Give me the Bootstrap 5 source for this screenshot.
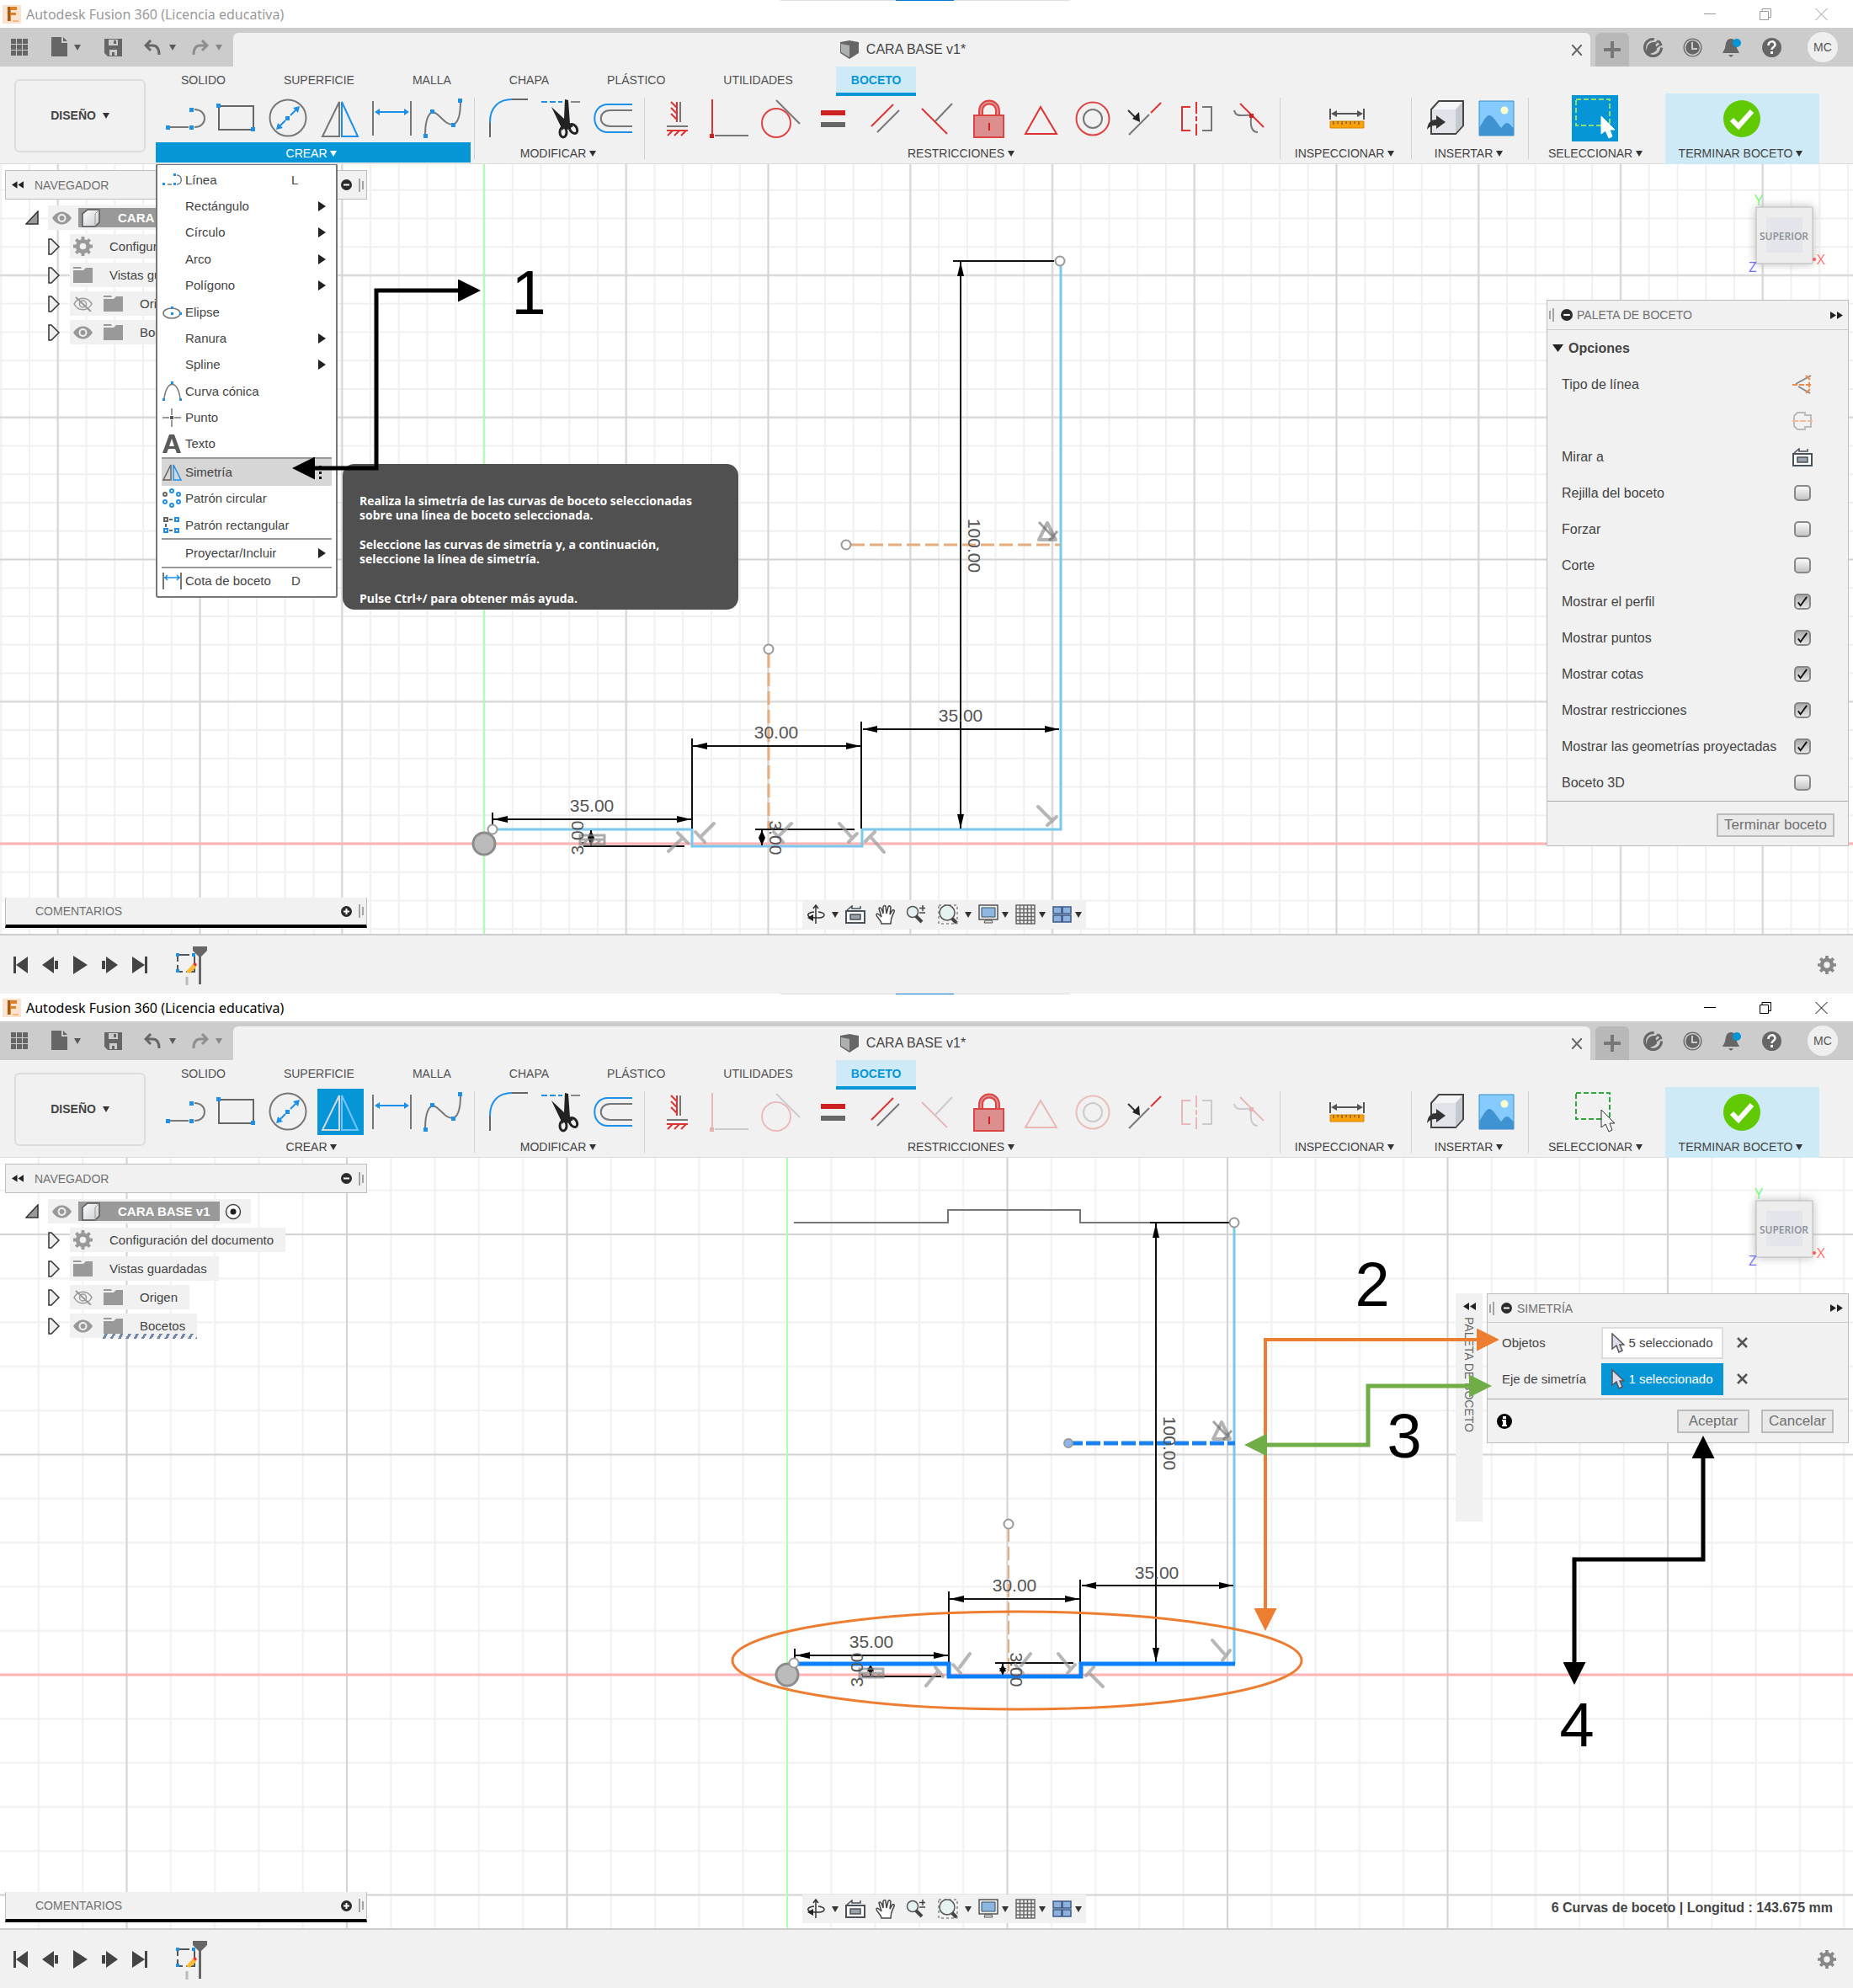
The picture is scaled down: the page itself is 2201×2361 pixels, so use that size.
<!DOCTYPE html>
<html lang="es">
<head>
<meta charset="utf-8">
<meta name="viewport" content="width=device-width, initial-scale=1">
<title>Autodesk Fusion 360 (Licencia educativa)</title>
<link href="https://cdn.jsdelivr.net/npm/bootstrap@5.3.0/dist/css/bootstrap.min.css" rel="stylesheet">
<style>
body{font-family:"Liberation Sans",Arial,sans-serif;font-size:15px;line-height:20px;color:#444;background:#fff}
svg{display:block;flex:none}
button{font-family:inherit}
.plain{border:0;background:none;padding:0;color:inherit;font-size:inherit;line-height:inherit}
.caret{display:inline-block;border:4px solid transparent;border-top:7px solid #333;border-bottom:0;vertical-align:1px}
/* title bar */
.titlebar{height:33px;padding:0 30px 0 3px;font-family:"Noto Sans","Open Sans",sans-serif;font-size:16px;color:#999;background:#fff;position:relative}
.win-b .titlebar{color:#000}
.titlebar .snap{position:absolute;top:0;left:927px;width:344px;height:1px;background:#e0e0e0}
.titlebar .snap i{display:block;margin-left:137px;width:69px;height:1px;background:#0078d7}
.win-ctl{gap:52px}
/* document bar */
.docbar{height:46px;background:#ccc;color:#666;padding-right:18px}
.quick{width:277px;padding-left:13px}
.doctab{margin-top:6px;height:40px;background:#f1f1f1;border-radius:6px 6px 0 0;font-size:16px;color:#444;padding-right:10px}
.newtab{margin:6px 0 0 6px;width:40px;height:40px;background:#b8b8b8;border-radius:6px 6px 0 0}
.avatar{width:36px;height:36px;border-radius:50%;background:#efefef;font-size:14px;color:#555;margin-left:7px}
.redo-c{opacity:.6}
.docicons{gap:24px;padding-left:17px}
/* ribbon */
.ribbon{background:#f1f1f1;border-bottom:1px solid #dcdcdc;height:116px;font-size:14px}
.workspace{width:156px;height:87px;margin:15px 12px 0 17px;border:2px solid #ddd;border-radius:6px;font-weight:700;background:#f1f1f1;color:#444;padding-bottom:2px}
.rtabs{height:32px;padding-left:12px;gap:33px}
.rtabs a{height:35px;padding:6px 18px 0;color:#505050;text-decoration:none}
.rtabs a.on{background:#cdeaf6;border-bottom:4px solid #0696d7;color:#0696d7;font-weight:700}
.rgroup{height:83px;padding-top:2px;position:relative}
.rgroup::after{content:"";position:absolute;right:0;top:5px;bottom:5px;width:1px;background:#d2d2d2}
.rgroup .set{height:55px}
.rgroup .glabel{height:24px;margin-top:1px;padding:2px 4px 0 0;color:#444;width:100%}
.g-crear{width:379px;padding-right:5px}.g-crear .set{padding:0 5px 0 8px}
.g-mod{width:202px}.g-mod .set{padding:0 10px 0 13px}
.g-res{width:755px}.g-res .set{padding:0 10px 0 11px}
.g-ins{width:156px}.g-imp{width:139px}.g-imp .set{padding:0 11px 0 12px}
.g-sel{width:162px}.g-sel .set{padding-right:6px}.g-sel::after,.g-fin::after{display:none}
.g-fin{width:183px;background:#cdeaf6;height:84px}
.tool{width:55px;height:55px}
.win-a .g-crear .glabel{background:#0696d7;color:#fff}
.win-a .g-crear .caret{border-top-color:#fff}
.win-a .g-sel .tool{background:#0696d7;--dash:#8fe06a;--cur:#fff;--curline:#fff}
.win-b .t-mirror{background:#0696d7;--g:#d8d8d8;--b:#6fc3ff}
.win-b .dim{opacity:.3}
/* canvas */
.canvas{position:relative;min-height:914px;background:#fff;overflow:hidden}
.win-b .canvas{min-height:915px}
.layer{position:absolute;left:0;top:0;width:100%;height:100%}
.notes{z-index:6;pointer-events:none}
.panelbar{width:430px;background:#f1f1f1;border:1px solid #bdbdbd;font-size:14px;color:#707070}
.browser{position:absolute;left:6px;top:7px}
.browser .panelbar{height:35px;padding:0 3px 0 7px}
.tree{padding:7px 0 0 0}
.win-a .tree{width:179px;overflow:hidden}
.tree li{height:29px;margin-bottom:5px;list-style:none;white-space:nowrap}
.tree .cell{background:#f1f1f1;height:29px}
.tree .root{margin-left:24px}
.tree .kid{margin-left:51px}
.rootname{height:23px;background:#999;color:#fff;font-weight:700;padding:0 12px 0 3px;gap:20px}
.win-b .hatch{position:relative}
.win-b .hatch::after{content:"";position:absolute;left:36px;right:0;bottom:-1px;height:6px;background:repeating-linear-gradient(120deg,transparent 0 5px,#7488a8 5px 8px)}
.comments{position:absolute;left:6px;bottom:7px;height:36px;border-bottom:4px solid #000;border-top:0;padding:0 3px 0 35px}
.viewbar{position:absolute;left:calc(50% - 148px);bottom:6px;height:34px;background:#f1f1f1;padding:0 5px;gap:8px}
.status{position:absolute;right:24px;bottom:14px;font-size:16px;font-weight:700;color:#444}
/* create menu */
.cmenu{position:absolute;left:185px;top:-1px;z-index:4;width:216px;min-height:516px;background:#fff;border:2px solid #777;border-radius:3px;padding:2px 5px}
.cmenu button{flex:1 1 0;width:100%;padding:0 5px 0 1px}
.cmenu .ic{width:24px;margin-right:3px}
.cmenu .key{width:43px}
.cmenu .sub{border:6px solid transparent;border-left:9px solid #222;border-right:0;margin-right:2px}
.cmenu hr{margin:0;height:2px;border:0;background:#999;opacity:1}
.cmenu .hot{background:#d6d6d6}
.tip{position:absolute;left:407px;top:356px;z-index:3;width:470px;background:#505050;color:#fff;border-radius:14px;padding:35px 20px 5px;font:700 14px/17px "Open Sans","Noto Sans",sans-serif;white-space:nowrap}
.tip p{margin:0 0 18px}
.tip p.more{margin:0;padding-top:12px}
/* floating panels */
.float{position:absolute;right:5px;background:#f1f1f1;border:1px solid #bdbdbd}
.float .head{height:34px;border-bottom:1px solid #ccc;font-size:14px;color:#707070;padding:0 6px 0 2px}
.palette{top:161px;width:359px;font-size:16px}
.palette .head{height:35px}
.palette .prow{height:43px;padding:0 42px 0 17px}
.palette .foot{height:53px;border-top:1px solid #aaa;padding:3px 16px 0 0}
.dbtn{height:28px;border:2px solid #bbb;background:#e9e9e9;color:#707070;font-size:17px;line-height:22px;padding:0 7px}
.chk{appearance:none;margin:0 2px 0 0;width:20px;height:19px;border:2px solid #888;border-radius:5px;background:linear-gradient(#fafafa,#c4c4c4)}
.chk:checked{background:url("data:image/svg+xml,%3Csvg xmlns='http://www.w3.org/2000/svg' viewBox='0 0 16 16'%3E%3Cpath d='M3 9l3 4 8-11' fill='none' stroke='%23111' stroke-width='2'/%3E%3C/svg%3E"),linear-gradient(#aaa,#e6e6e6)}
.mirror{top:161px;width:430px}
.mirror .mrow{height:43px;padding-left:17px}
.mirror .mlabel{width:118px}
.mirror .foot{height:52px;border-top:1px solid #aaa;padding:0 17px 0 11px}
.pick{width:145px;height:38px;border:2px solid #ddd;background:#fff;color:#444}
.pick.on{background:#0696d7;border-color:#0696d7;color:#fff}
.clearx{width:44px}
.side{position:absolute;right:440px;top:161px;width:32px;height:271px;background:#f1f1f1;font-size:14px;color:#666;padding-top:11px}
.side span{writing-mode:vertical-rl;margin-top:8px}
.cubeview{position:absolute;right:29px;top:31px}
/* timeline */
.timeline{height:71px;background:#f1f1f1;border-top:2px solid #ccc;padding:0 20px 0 14px}
.play{gap:14px}
.dimtxt{font-size:21px;fill:#555;text-anchor:middle}
.num{font-size:74px;fill:#000;text-anchor:middle}
</style>
<script src="https://cdn.jsdelivr.net/npm/bootstrap@5.3.0/dist/js/bootstrap.bundle.min.js"></script>
</head>
<body>

<svg width="0" height="0" class="position-absolute" aria-hidden="true">
<defs>
<marker id="ar" viewBox="0 0 17 8" refX="17" refY="4" markerWidth="17" markerHeight="8" markerUnits="userSpaceOnUse" orient="auto-start-reverse"><path d="M0 0L17 4L0 8z" fill="#000"/></marker>
<marker id="as" viewBox="0 0 9 8" refX="9" refY="4" markerWidth="9" markerHeight="8" markerUnits="userSpaceOnUse" orient="auto-start-reverse"><path d="M0 0L9 4L0 8z" fill="#000"/></marker>
<marker id="bk" viewBox="0 0 27 27" refX="20" refY="13.5" markerWidth="27" markerHeight="27" markerUnits="userSpaceOnUse" orient="auto-start-reverse"><path d="M0 0L27 13.5L0 27z" fill="#000"/></marker>
<marker id="og" viewBox="0 0 27 27" refX="20" refY="13.5" markerWidth="27" markerHeight="27" markerUnits="userSpaceOnUse" orient="auto-start-reverse"><path d="M0 0L27 13.5L0 27z" fill="#ed7d31"/></marker>
<marker id="gn" viewBox="0 0 27 27" refX="20" refY="13.5" markerWidth="27" markerHeight="27" markerUnits="userSpaceOnUse" orient="auto-start-reverse"><path d="M0 0L27 13.5L0 27z" fill="#70ad47"/></marker>
<linearGradient id="box" x1="0" y1="0" x2="1" y2="1"><stop offset="0" stop-color="#fff"/><stop offset="1" stop-color="#c9ccd2"/></linearGradient>

<symbol id="logo" viewBox="0 0 22 22"><path fill="#fbe3cf" d="M0 0h22v22H0z"/><path fill="#d9822b" d="M6 2h11v4h-7v3h6v3h-6v7H6z"/><path fill="#a85a12" d="M6 2h3v17H6z"/><path fill="#f3b988" d="M12 18h7v2h-7z"/></symbol>
<symbol id="cube" viewBox="0 0 24 22"><path fill="#666" d="M1 2L12 0l11 2v13L12 22 1 15z"/><path fill="#adb0b0" d="M2 4l10 2v14L2 14z"/></symbol>
<symbol id="i-line" viewBox="0 0 55 55"><path d="M9 38h22M38 17c16 0 16 21 0 21" fill="none" stroke="#777" stroke-width="2"/><path fill="#1e90e8" d="M4 36h5v5H4zM32 36h5v5h-5zM32 15h5v5h-5z"/></symbol>
<symbol id="i-rect" viewBox="0 0 55 55"><path d="M6 13h41v28H6z" fill="none" stroke="#666" stroke-width="2"/><path fill="#1e90e8" d="M3 10h5v5H3zM44 38h5v5h-5z"/></symbol>
<symbol id="i-circle" viewBox="0 0 55 55"><circle cx="27" cy="27" r="21.500" fill="none" stroke="#777" stroke-width="2"/><path d="M30 24l8-8M24 30l-8 8" stroke="#1e90e8" stroke-width="2"/><path fill="#1e90e8" d="M24 25h5v5h-5zM41 13l-2 8-6-6zM13 41l2-8 6 6z"/></symbol>
<symbol id="i-mirror" viewBox="0 0 55 55"><path d="M26 8v41H6z" fill="none" style="stroke:var(--g,#777)" stroke-width="2"/><path d="M29 8v41h19z" fill="none" style="stroke:var(--b,#1e90e8)" stroke-width="2"/></symbol>
<symbol id="i-dim" viewBox="0 0 55 55"><path d="M5 7v41M50 7v41" stroke="#777" stroke-width="2"/><path d="M10 20h35" stroke="#1e90e8" stroke-width="2"/><path fill="#1e90e8" d="M7 20l6-4v8zM48 20l-6-4v8z"/></symbol>
<symbol id="i-spline" viewBox="0 0 55 55"><path d="M6 48C6 30 9 22 15 20C24 22 28 35 39 35C46 33 48 20 48 7" fill="none" stroke="#777" stroke-width="2"/><path fill="#1e90e8" d="M4 46h5v5H4zM12 17h5v5h-5zM37 33h5v5h-5zM45 4h5v5h-5z"/></symbol>
<symbol id="i-fillet" viewBox="0 0 55 55"><path d="M5 32C5 14 16 5 31 5" fill="none" stroke="#1e90e8" stroke-width="2"/><path d="M5 32v18M31 5h19" stroke="#666" stroke-width="2"/></symbol>
<symbol id="i-trim" viewBox="0 0 55 55"><path d="M4 8h25" stroke="#1e90e8" stroke-width="2" stroke-dasharray="7 3"/><path d="M39 8h11" stroke="#888" stroke-width="2"/><path d="M16 14l15 14 1-23 4 1 2 28 4 3-7 4-3-3-3 4-2-5z" fill="#222"/><ellipse cx="30" cy="44" rx="4" ry="6" fill="none" stroke="#222" stroke-width="3"/><ellipse cx="42" cy="40" rx="4" ry="6" transform="rotate(-35 42 40)" fill="none" stroke="#222" stroke-width="3"/></symbol>
<symbol id="i-offset" viewBox="0 0 55 55"><path d="M50 11H21C0 11 0 44 21 44H50" fill="none" stroke="#1e90e8" stroke-width="2"/><path d="M50 18H24C9 18 9 37 24 37H50" fill="none" stroke="#777" stroke-width="2"/></symbol>
<symbol id="c1" viewBox="0 0 55 55"><path d="M31 8v24M15 37h25" stroke="#777" stroke-width="2"/><path d="M27 8v24M27 15l-7-7M27 22l-7-7M27 29l-7-7M15 42h25M22 42l-6 6M30 42l-6 6M38 42l-6 6" stroke="#d33" stroke-width="2"/></symbol>
<symbol id="c2" viewBox="0 0 55 55"><path d="M7 5v42" stroke="#d33" stroke-width="2"/><path d="M10 48h40" stroke="#777" stroke-width="2"/><path fill="#c22" d="M4 46h5v5H4z"/></symbol>
<symbol id="c3" viewBox="0 0 55 55"><circle cx="22" cy="33" r="17" fill="none" stroke="#d44" stroke-width="2"/><path d="M22 6l28 28" stroke="#777" stroke-width="2"/></symbol>
<symbol id="c4" viewBox="0 0 55 55"><path fill="#c22" d="M13 18h29v6H13z"/><path fill="#666" d="M13 32h29v6H13z"/></symbol>
<symbol id="c5" viewBox="0 0 55 55"><path d="M11 37l26-26" stroke="#d33" stroke-width="2"/><path d="M18 44l26-26" stroke="#777" stroke-width="2"/></symbol>
<symbol id="c6" viewBox="0 0 55 55"><path d="M9 16l30 30" stroke="#d33" stroke-width="2"/><path d="M25 31l20-21" stroke="#777" stroke-width="2"/></symbol>
<symbol id="c7" viewBox="0 0 55 55"><path d="M18 24v-5c0-14 20-14 20 0v5" fill="none" stroke="#d44" stroke-width="6"/><path d="M18 24v-5c0-14 20-14 20 0v5" fill="none" stroke="#dd8e8e" stroke-width="2"/><path d="M10 24h35v26H10z" fill="#dd8e8e" stroke="#d44" stroke-width="2"/><path d="M28 33v9" stroke="#c22" stroke-width="2"/></symbol>
<symbol id="c8" viewBox="0 0 55 55"><path d="M27 14l19 32H9z" fill="none" stroke="#d33" stroke-width="2"/></symbol>
<symbol id="c9" viewBox="0 0 55 55"><circle cx="27" cy="28" r="19.500" fill="none" stroke="#d44" stroke-width="2"/><circle cx="27" cy="28" r="11" fill="none" stroke="#777" stroke-width="2"/></symbol>
<symbol id="c10" viewBox="0 0 55 55"><path d="M9 47l24-24" stroke="#777" stroke-width="2"/><path d="M35 21l12-12" stroke="#d33" stroke-width="2"/><path d="M8 18l9 9" stroke="#333" stroke-width="2"/><path d="M22 32l-9-4 8-8z" fill="#222"/></symbol>
<symbol id="c11" viewBox="0 0 55 55"><path d="M20 14H10v28h10" fill="none" stroke="#d33" stroke-width="2"/><path d="M34 14h11v28H34" fill="none" stroke="#777" stroke-width="2"/><path d="M27 8v14M27 25v6M27 34v14" stroke="#d33" stroke-width="2"/></symbol>
<symbol id="c12" viewBox="0 0 55 55"><path d="M10 18c2 9 9 5 19 6M30 27c-1 10 1 17 8 17" fill="none" stroke="#777" stroke-width="2"/><path d="M17 10l28 28" stroke="#d33" stroke-width="2"/><path fill="#c22" d="M28 22h5v5h-5z"/></symbol>
<symbol id="i-inspect" viewBox="0 0 55 55"><path d="M8 16v13M48 16v13M12 22h32" stroke="#555" stroke-width="2"/><path d="M9 22l7-4v8zM47 22l-7-4v8z" fill="#555"/><path d="M8 31h40v8H8z" fill="#f9a10a" stroke="#d98500"/><path d="M12 31v4M17 31v3M22 31v4M27 31v3M32 31v4M37 31v3M42 31v4" stroke="#543"/></symbol>
<symbol id="i-import" viewBox="0 0 55 55"><path d="M11 17L20 7h29v29l-9 10H11z" fill="#f4f5f7" stroke="#444" stroke-width="2"/><path d="M12 17h28v28H12z" fill="#e2e4ea"/><path d="M40 17l8-9v28l-8 9z" fill="#c6c9d0"/><path d="M6 41c1-9 5-12 11-12v-5l11 8-11 8v-4c-5 0-8 1-11 5z" fill="#333"/></symbol>
<symbol id="i-image" viewBox="0 0 55 55"><path d="M7 7h41v41H7z" fill="#85cbff" stroke="#3b8ccc"/><path d="M7 39c5-8 8-15 12-15s7 6 14 15c3-3 4-6 7-6s4 3 8 6v9H7z" fill="#3f93d0"/><circle cx="37" cy="18" r="4.500" fill="#ffc"/></symbol>
<symbol id="i-select" viewBox="0 0 55 55"><path d="M5 5h40v31H5z" fill="none" style="stroke:var(--dash,#2faa3a)" stroke-width="2" stroke-dasharray="6 3"/><path d="M35 25v21l5-4 4 9 4-2-3-8h6z" style="fill:var(--cur,#f4f4f4);stroke:var(--curline,#333)" stroke-width="1"/></symbol>
<symbol id="i-ok" viewBox="0 0 55 55"><circle cx="27" cy="28" r="22" fill="#61c900"/><path d="M15 29l8 8 16-18" fill="none" stroke="#fff" stroke-width="6"/></symbol>

<symbol id="eye" viewBox="0 0 23 16"><path d="M0 8C6-2 17-2 23 8C17 18 6 18 0 8z" fill="#999"/><circle cx="11.500" cy="8" r="5" fill="#f1f1f1"/><circle cx="11.500" cy="8" r="3" fill="#999"/></symbol>
<symbol id="eyeoff" viewBox="0 0 23 18"><path d="M1 9C6 0 17 0 22 9C17 18 6 18 1 9z" fill="none" stroke="#999" stroke-width="1.500"/><circle cx="11.500" cy="9" r="4" fill="none" stroke="#999" stroke-width="1.500"/><path d="M3 1l18 17" stroke="#999" stroke-width="2"/></symbol>
<symbol id="gear" viewBox="0 0 24 24"><circle cx="12" cy="12" r="6.500" fill="none" stroke="currentColor" stroke-width="5"/><path d="M12 0v5M12 19v5M0 12h5M19 12h5M3.500 3.500l4 4M16.500 16.500l4 4M3.500 20.500l4-4M16.500 7.500l4-4" stroke="currentColor" stroke-width="4"/></symbol>
<symbol id="folder" viewBox="0 0 23 19"><path d="M0 4h12l3-3h8v18H0z" fill="#999"/><path d="M0 0h9l1 2H0z" fill="#999"/></symbol>
<symbol id="box3" viewBox="0 0 24 24"><path d="M2 7l6-5h14v15l-5 5H2z" fill="url(#box)" stroke="#555" stroke-width="1.500"/><path d="M17 22V7l5-5" fill="none" stroke="#999"/></symbol>
<symbol id="tw" viewBox="0 0 14 20"><path d="M1 1h3l9 9-9 9H1z" fill="#eee" stroke="#333" stroke-width="1.500"/></symbol>
<symbol id="twopen" viewBox="0 0 16 17"><path d="M15 1v15H1z" fill="#999" stroke="#333" stroke-width="1.500"/></symbol>
<symbol id="minus" viewBox="0 0 13 13"><circle cx="6.500" cy="6.500" r="6.500" fill="#2b2b2b"/><path d="M3 6.500h7" stroke="#fff" stroke-width="2"/></symbol>
<symbol id="plus" viewBox="0 0 13 13"><circle cx="6.500" cy="6.500" r="6.500" fill="#2b2b2b"/><path d="M3 6.500h7M6.500 3v7" stroke="#fff" stroke-width="2"/></symbol>
<symbol id="rew" viewBox="0 0 15 9"><path d="M7 0v9L0 4.500zM15 0v9L8 4.500z" fill="#222"/></symbol>
<symbol id="fwd" viewBox="0 0 15 9"><path d="M0 0v9l7-4.500zM8 0v9l7-4.500z" fill="#222"/></symbol>
<symbol id="grip" viewBox="0 0 6 16"><path d="M1 0v16" stroke="#888" stroke-width="1.500"/><path d="M5 3v10" stroke="#888" stroke-width="1.500"/></symbol>
<symbol id="gripr" viewBox="0 0 6 16"><path d="M5 0v16" stroke="#888" stroke-width="1.500"/><path d="M1 3v10" stroke="#888" stroke-width="1.500"/></symbol>
<symbol id="arrow" viewBox="0 0 16 24"><path d="M1 1v18l5-4 3 8 4-2-3-7h5z" fill="#dde" stroke="#555" stroke-width="1.500"/></symbol>
<symbol id="look" viewBox="0 0 24 22"><path d="M1 7h22v14H1z" fill="#fff" stroke="#4a5058" stroke-width="2"/><path d="M6 11h12v6H6z" fill="#9aa3ab" stroke="#4a5058" stroke-width="1.500"/><path d="M2 6l6-5v3h10V1" fill="none" stroke="#4a5058" stroke-width="1.500"/></symbol>
<symbol id="mx" viewBox="0 0 13 13"><path d="M1 1l11 11M12 1L1 12" stroke="#555" stroke-width="2.500"/></symbol>
<symbol id="geo" viewBox="0 0 28 26"><path d="M14 3l10 20H4z" fill="none" stroke="#666" stroke-opacity=".5" stroke-width="4" stroke-linejoin="round"/><path d="M4 2l18 19M26 13L16 24" fill="none" stroke="#666" stroke-opacity=".6" stroke-width="3"/></symbol>
</defs>
</svg>

<template id="frame">
  <header class="titlebar d-flex align-items-center">
    <div class="snap"><i></i></div>
    <svg width="22" height="22"><use href="#logo"/></svg>
    <span class="flex-grow-1" style="margin-left:6px">Autodesk Fusion 360 (Licencia educativa)</span>
    <div class="win-ctl d-flex">
      <button class="plain" aria-label="Minimizar"><svg width="14" height="14"><path d="M0 6.500h14" stroke="currentColor"/></svg></button>
      <button class="plain" aria-label="Restaurar"><svg width="14" height="14"><path d="M.5 3.500h10v10H.5zM3 3.500v-3h10.500v10H11" fill="none" stroke="currentColor"/></svg></button>
      <button class="plain" aria-label="Cerrar"><svg width="15" height="14"><path d="M.5 0l14 14M14.500 0l-14 14" stroke="currentColor"/></svg></button>
    </div>
  </header>
  <div class="docbar d-flex align-items-start">
    <div class="quick d-flex align-items-center h-100">
      <button class="plain" aria-label="Datos"><svg width="21" height="21" fill="#666"><path d="M0 0h6v6H0zM7 0h6v6H7zM14 0h6v6h-6zM0 7h6v6H0zM7 7h6v6H7zM14 7h6v6h-6zM0 14h6v6H0zM7 14h6v6H7zM14 14h6v6h-6z"/></svg></button>
      <button class="plain d-flex align-items-center" style="margin-left:27px" aria-label="Archivo"><svg width="19" height="24"><path d="M0 0h12v7h7v16H0zM14 0l5 5h-5z" fill="#666"/></svg><i class="caret ms-2 opacity-75"></i></button>
      <button class="plain" style="margin-left:28px" aria-label="Guardar"><svg width="21" height="21"><path d="M0 0h21v21H4l-4-4zM5 1v7h11V1zM6 13v7h3v-4h3v4h3v-7z" fill="#666" fill-rule="evenodd"/><path d="M11 2h3v4h-3z" fill="#666"/></svg></button>
      <button class="plain d-flex align-items-center" style="margin-left:26px" aria-label="Deshacer"><svg width="20" height="18"><path d="M8 1L2 7l6 6M2 7h8c6 0 8 4 8 11" fill="none" stroke="#666" stroke-width="3"/></svg><i class="caret opacity-75" style="margin-left:10px"></i></button>
      <button class="plain d-flex align-items-center redo-c" style="margin-left:19px" aria-label="Rehacer"><svg width="20" height="18"><path d="M12 1l6 6-6 6M18 7h-8c-6 0-8 4-8 11" fill="none" stroke="#666" stroke-width="3"/></svg><i class="caret opacity-75" style="margin-left:8px"></i></button>
    </div>
    <div class="doctab flex-grow-1 d-flex align-items-center">
      <div class="flex-grow-1 d-flex justify-content-center align-items-center gap-2"><svg width="24" height="22"><use href="#cube"/></svg>CARA BASE v1*</div>
      <button class="plain" aria-label="Cerrar documento"><svg width="12" height="13"><path d="M0 0l12 13M12 0L0 13" stroke="#666" stroke-width="2"/></svg></button>
    </div>
    <button class="plain newtab d-flex align-items-center justify-content-center" aria-label="Nuevo"><svg width="20" height="20"><path d="M10 0v20M0 10h20" stroke="#777" stroke-width="4"/></svg></button>
    <div class="docicons d-flex align-items-center h-100">
      <button class="plain" aria-label="Extensiones"><svg width="23" height="23"><circle cx="11.500" cy="11.500" r="10" fill="none" stroke="#666" stroke-width="3" stroke-dasharray="48 6 6 3"/><path d="M5 19c-1-9 2-13 8-13l2 8c-3 4-6 3-10 5zM13 8l5-5M15 12l5-4" fill="#666" stroke="#666" stroke-width="2"/></svg></button>
      <button class="plain" aria-label="Trabajos"><svg width="23" height="23"><circle cx="11.500" cy="11.500" r="11" fill="#666"/><circle cx="11.500" cy="11.500" r="9" fill="none" stroke="#ccc" stroke-width="1.500"/><path d="M11 5v8h6" fill="none" stroke="#ccc" stroke-width="2"/></svg></button>
      <button class="plain" aria-label="Notificaciones"><svg width="23" height="23"><path d="M10 1c6 0 6 6 7 11l3 6H0l3-6c1-5 1-11 7-11zM7 20h6l-3 3z" fill="#666"/><circle cx="17" cy="6" r="5" fill="#0696d7"/></svg></button>
      <button class="plain" aria-label="Ayuda"><svg width="23" height="23"><circle cx="11.500" cy="11.500" r="11.500" fill="#666"/><path d="M7.500 9c0-6 8-6 8-1 0 3-4 3-4 6" fill="none" stroke="#fff" stroke-width="2.500"/><path d="M10 16h3v3h-3z" fill="#fff"/></svg></button>
      <button class="plain avatar">MC</button>
    </div>
  </div>
  <div class="ribbon d-flex align-items-start">
    <button class="plain workspace">DISEÑO <i class="caret ms-1"></i></button>
    <div class="flex-grow-1">
      <nav class="rtabs d-flex">
        <a href="#">SOLIDO</a><a href="#">SUPERFICIE</a><a href="#">MALLA</a><a href="#">CHAPA</a><a href="#">PLÁSTICO</a><a href="#">UTILIDADES</a><a href="#" class="on">BOCETO</a>
      </nav>
      <div class="d-flex">
        <div class="rgroup g-crear"><div class="set d-flex justify-content-between">
          <button class="plain tool" aria-label="Línea"><svg width="55" height="55"><use href="#i-line"/></svg></button><button class="plain tool" aria-label="Rectángulo"><svg width="55" height="55"><use href="#i-rect"/></svg></button><button class="plain tool" aria-label="Círculo"><svg width="55" height="55"><use href="#i-circle"/></svg></button><button class="plain tool t-mirror" aria-label="Simetría"><svg width="55" height="55"><use href="#i-mirror"/></svg></button><button class="plain tool" aria-label="Cota"><svg width="55" height="55"><use href="#i-dim"/></svg></button><button class="plain tool" aria-label="Spline"><svg width="55" height="55"><use href="#i-spline"/></svg></button>
        </div><button class="plain glabel">CREAR <i class="caret"></i></button></div>
        <div class="rgroup g-mod"><div class="set d-flex justify-content-between">
          <button class="plain tool" aria-label="Empalme"><svg width="55" height="55"><use href="#i-fillet"/></svg></button><button class="plain tool" aria-label="Recortar"><svg width="55" height="55"><use href="#i-trim"/></svg></button><button class="plain tool" aria-label="Desfase"><svg width="55" height="55"><use href="#i-offset"/></svg></button>
        </div><button class="plain glabel">MODIFICAR <i class="caret"></i></button></div>
        <div class="rgroup g-res"><div class="set d-flex justify-content-between">
          <button class="plain tool" aria-label="Horizontal/Vertical"><svg width="55" height="55"><use href="#c1"/></svg></button><button class="plain tool dim" aria-label="Coincidente"><svg width="55" height="55"><use href="#c2"/></svg></button><button class="plain tool dim" aria-label="Tangente"><svg width="55" height="55"><use href="#c3"/></svg></button><button class="plain tool" aria-label="Igual"><svg width="55" height="55"><use href="#c4"/></svg></button><button class="plain tool" aria-label="Paralelo"><svg width="55" height="55"><use href="#c5"/></svg></button><button class="plain tool dim" aria-label="Perpendicular"><svg width="55" height="55"><use href="#c6"/></svg></button><button class="plain tool" aria-label="Bloquear"><svg width="55" height="55"><use href="#c7"/></svg></button><button class="plain tool dim" aria-label="Punto medio"><svg width="55" height="55"><use href="#c8"/></svg></button><button class="plain tool dim" aria-label="Concéntrico"><svg width="55" height="55"><use href="#c9"/></svg></button><button class="plain tool" aria-label="Colineal"><svg width="55" height="55"><use href="#c10"/></svg></button><button class="plain tool dim" aria-label="Simétrico"><svg width="55" height="55"><use href="#c11"/></svg></button><button class="plain tool dim" aria-label="Curvatura"><svg width="55" height="55"><use href="#c12"/></svg></button>
        </div><button class="plain glabel">RESTRICCIONES <i class="caret"></i></button></div>
        <div class="rgroup g-ins"><div class="set d-flex justify-content-center"><button class="plain tool" aria-label="Medir"><svg width="55" height="55"><use href="#i-inspect"/></svg></button></div><button class="plain glabel">INSPECCIONAR <i class="caret"></i></button></div>
        <div class="rgroup g-imp"><div class="set d-flex justify-content-between"><button class="plain tool" aria-label="Derivar"><svg width="55" height="55"><use href="#i-import"/></svg></button><button class="plain tool" aria-label="Lienzo"><svg width="55" height="55"><use href="#i-image"/></svg></button></div><button class="plain glabel">INSERTAR <i class="caret"></i></button></div>
        <div class="rgroup g-sel"><div class="set d-flex justify-content-center"><button class="plain tool" aria-label="Seleccionar"><svg width="55" height="55"><use href="#i-select"/></svg></button></div><button class="plain glabel">SELECCIONAR <i class="caret"></i></button></div>
        <div class="rgroup g-fin"><div class="set d-flex justify-content-center"><button class="plain tool" aria-label="Terminar"><svg width="55" height="55"><use href="#i-ok"/></svg></button></div><button class="plain glabel">TERMINAR BOCETO <i class="caret"></i></button></div>
      </div>
    </div>
  </div>
</template>

<template id="overlays">
  <div class="browser">
    <div class="panelbar d-flex align-items-center">
      <svg width="14" height="9"><use href="#rew"/></svg><span class="flex-grow-1" style="margin-left:13px">NAVEGADOR</span>
      <svg width="13" height="13"><use href="#minus"/></svg><svg class="ms-2" width="6" height="16"><use href="#grip"/></svg>
    </div>
    <ul class="tree mb-0">
      <li class="root d-flex align-items-center"><svg width="16" height="17"><use href="#twopen"/></svg>
        <div class="cell d-flex align-items-center" style="margin-left:11px;padding:0 11px 0 5px"><svg width="23" height="16"><use href="#eye"/></svg>
          <div class="rootname d-flex align-items-center ms-2"><svg width="24" height="24"><use href="#box3"/></svg>CARA BASE v1</div>
          <svg style="margin-left:6px" width="20" height="20"><circle cx="10" cy="10" r="8.500" fill="#fff" stroke="#444" stroke-width="1.500"/><circle cx="10" cy="10" r="3.500" fill="#222"/></svg></div></li>
      <li class="kid d-flex align-items-center"><svg width="14" height="20"><use href="#tw"/></svg>
        <div class="cell d-flex align-items-center" style="margin-left:12px;padding:0 14px 0 4px;gap:20px;color:#444"><svg width="23" height="23" style="color:#999"><use href="#gear"/></svg>Configuración del documento</div></li>
      <li class="kid d-flex align-items-center"><svg width="14" height="20"><use href="#tw"/></svg>
        <div class="cell d-flex align-items-center" style="margin-left:12px;padding:0 14px 0 4px;gap:20px"><svg width="23" height="19"><use href="#folder"/></svg>Vistas guardadas</div></li>
      <li class="kid d-flex align-items-center"><svg width="14" height="20"><use href="#tw"/></svg>
        <div class="cell d-flex align-items-center" style="margin-left:12px;padding:0 14px 0 4px"><svg width="23" height="18"><use href="#eyeoff"/></svg><svg style="margin:0 20px 0 13px" width="23" height="19"><use href="#folder"/></svg>Origen</div></li>
      <li class="kid d-flex align-items-center"><svg width="14" height="20"><use href="#tw"/></svg>
        <div class="cell hatch d-flex align-items-center" style="margin-left:12px;padding:0 14px 0 4px"><svg width="23" height="16"><use href="#eye"/></svg><svg style="margin:0 20px 0 13px" width="23" height="19"><use href="#folder"/></svg>Bocetos</div></li>
    </ul>
  </div>
  <svg class="cubeview" width="98" height="104" font-family="Open Sans">
    <text x="10" y="18" font-size="18" fill="#77f877">Y</text>
    <path d="M12 20h67v67H12z" fill="#ededee" stroke="#bbb" style="filter:drop-shadow(0 0 6px #bbb)"/><path d="M24 32h43v42H24z" fill="#e3e5ea"/>
    <text x="45" y="59" font-size="12" font-weight="600" text-anchor="middle" fill="#8b8f98">SUPERIOR</text>
    <circle cx="81" cy="82" r="2" fill="#f55"/><text x="84" y="88" font-size="17" fill="#ff7070">X</text><text x="3" y="97" font-size="17" fill="#7070ff">Z</text>
  </svg>
  <div class="comments panelbar d-flex align-items-center"><span class="flex-grow-1">COMENTARIOS</span><svg width="13" height="13"><use href="#plus"/></svg><svg class="ms-2" width="6" height="16"><use href="#grip"/></svg></div>
  <div class="viewbar d-flex align-items-center">
    <button class="plain d-flex align-items-center gap-2" aria-label="Órbita"><svg width="22" height="24"><path d="M11 1v22M8 5l3-4 3 4M9 9c-10 1-10 7 2 7h5c7-1 7-6-2-7" fill="none" stroke="#333" stroke-width="1.500"/><path d="M8 12v8l-7-4z" fill="#222"/></svg><i class="caret"></i></button>
    <button class="plain" aria-label="Mirar a"><svg width="24" height="22"><use href="#look"/></svg></button>
    <button class="plain ms-1" aria-label="Encuadre"><svg width="24" height="24"><path d="M7 23c0-4-7-9-6-11s4 1 6 3L4 5c1-2 3-1 4 3l1 3V3c1-2 3-2 3 0l1 8 2-8c1-2 3-1 3 1l-1 8 3-5c1-1 3 0 2 2-2 5-4 6-4 14z" fill="#fff" stroke="#444" stroke-width="1.500"/></svg></button>
    <button class="plain ms-1" aria-label="Zoom"><svg width="24" height="24"><circle cx="8" cy="9" r="6.500" fill="#e6f2f2" stroke="#555" stroke-width="1.500"/><path d="M12 14l7 7" stroke="#444" stroke-width="4"/><path d="M20 1v7M16 4.500h7M16 10h7" stroke="#444" stroke-width="1.500"/></svg></button>
    <button class="plain d-flex align-items-center gap-2" style="margin-left:6px" aria-label="Zoom ventana"><svg width="24" height="24"><path d="M1 1h22v22H1z" fill="none" stroke="#555" stroke-dasharray="3 3"/><circle cx="11" cy="10" r="9" fill="#e6f2f2" stroke="#555" stroke-width="1.500"/><path d="M17 17l5 5" stroke="#444" stroke-width="4"/></svg><i class="caret"></i></button>
    <button class="plain d-flex align-items-center gap-1" aria-label="Visualización"><svg width="24" height="24"><path d="M1 1h22v17H1z" fill="#eee" stroke="#555" stroke-width="1.500"/><path d="M4 4h16v11H4z" fill="#8fb6e0" stroke="#356"/><path d="M8 19h8l1 3H7z" fill="#ddd" stroke="#555"/></svg><i class="caret"></i></button>
    <button class="plain d-flex align-items-center gap-1" aria-label="Rejilla"><svg width="24" height="24"><path d="M1 1h22v22H1zM5.500 1v22M10 1v22M14.500 1v22M19 1v22M1 5.500h22M1 10h22M1 14.500h22M1 19h22" fill="none" stroke="#666" stroke-width="1.500"/></svg><i class="caret"></i></button>
    <button class="plain d-flex align-items-center gap-1" aria-label="Ventanas"><svg width="23" height="20"><path d="M1 1h10v8H1zM12 1h10v8H12zM1 11h10v8H1zM12 11h10v8H12z" fill="#8fb1de" stroke="#3c5a88" stroke-width="1.500"/></svg><i class="caret"></i></button>
  </div>
</template>

<template id="foot">
  <footer class="timeline d-flex align-items-center">
    <div class="play d-flex align-items-center">
      <button class="plain" aria-label="Inicio"><svg width="20" height="22" fill="#444"><path d="M2 1h3v20H2zM19 1v20L5 11z"/></svg></button>
      <button class="plain" aria-label="Anterior"><svg width="22" height="22" fill="#444"><path d="M16 1v20L2 11zM17 6h4v10h-4z"/></svg></button>
      <button class="plain" aria-label="Reproducir"><svg width="20" height="22" fill="#444"><path d="M3 0v22l17-11z"/></svg></button>
      <button class="plain" aria-label="Siguiente"><svg width="22" height="22" fill="#444"><path d="M8 1v20l14-10zM3 6h4v10H3z"/></svg></button>
      <button class="plain" aria-label="Final"><svg width="22" height="22" fill="#444"><path d="M18 1h3v20h-3zM3 1v20l15-10z"/></svg></button>
    </div>
    <svg style="margin-left:32px" width="40" height="48"><path d="M3 12h20v20H3z" fill="none" stroke="#555" stroke-width="2" stroke-dasharray="14 4"/><path d="M1 10h4v4H1zM20 10h4v4h-4zM1 29h4v4H1z" fill="#1e90e8"/><path d="M13 32l8-9 4 4-8 7z" fill="#fb3"/><path d="M21 23l3-2 2 3-2 2z" fill="#e33"/><path d="M14 38v10" stroke="#bbb" stroke-width="3"/><path d="M21 2h17v5l-7 7v33h-3V14l-7-7z" fill="#666"/></svg>
    <button class="plain ms-auto" style="color:#888" aria-label="Preferencias"><svg width="22" height="22"><use href="#gear"/></svg></button>
  </footer>
</template>

<section class="win-a">
  <div data-part="frame"></div>
  <main class="canvas">
    <svg class="layer">
      <defs>
        <pattern id="m1" patternUnits="userSpaceOnUse" x="558.125" y="790.125" width="33.750" height="33.750"><path d="M16.875 0v34M0 16.875h34" stroke="#f0f0f0" stroke-width="2"/></pattern>
        <pattern id="M1" patternUnits="userSpaceOnUse" x="490.625" y="722.625" width="168.750" height="168.750"><path d="M84.375 0v169M0 84.375h169" stroke="#d4d4d4" stroke-width="2"/></pattern>
      </defs>
      <rect width="100%" height="100%" fill="url(#m1)"/><rect width="100%" height="100%" fill="url(#M1)"/>
      <path d="M0 807h4000" stroke="#ffb3b3" stroke-width="3"/><path d="M575 0v2000" stroke="#b0ffb0" stroke-width="2"/>
      <g transform="translate(0 -195)" fill="none">
        <circle cx="575" cy="1002" r="13" fill="#bbb" stroke="#8c8c8c" stroke-width="3"/>
        <path d="M585 985H822V1005H1024V985H1260V310" stroke="#7bc8ec" stroke-width="3"/>
        <path d="M913 777V985M1011 647H1259" stroke="#e6ac7c" stroke-width="3" stroke-dasharray="16 6"/>
        <g stroke="#111" stroke-width="2">
          <path d="M585 965v14M822 877V984M1023 857V984M1132 310H1252M693 1005H813M897 985H1015"/>
          <g marker-start="url(#ar)" marker-end="url(#ar)"><path d="M586 973H821"/><path d="M823 886H1022"/><path d="M1025 866H1258"/><path d="M1141 311V984"/></g>
          <g marker-start="url(#as)" marker-end="url(#as)"><path d="M702 986V1004"/><path d="M905 986V1004"/></g>
        </g>
        <g stroke="#999" stroke-opacity=".7" stroke-width="4" stroke-linecap="round"><path d="M794 1011l17-16M805 989l12 12M848 978l-16 16M826 988l11 12M940 978l-15 15M919 988l11 12M997 978l15 17M1018 990l-10 10M1035 995l15 17M1028 999l11-11M1233 958l17 17M1255 970l-11 10"/></g>
        <path d="M689 992h29v11h-29zM689 997h29M692 1003l5-5M700 1003l5-5M708 1003l5-5" stroke="#888" stroke-opacity=".7" stroke-width="3"/>
        <use href="#geo" x="1230" y="618" width="28" height="26"/>
        <g fill="#fff" stroke="#999" stroke-width="2"><circle cx="1259" cy="310" r="5.500"/><circle cx="585" cy="985" r="5.500"/><circle cx="913" cy="771" r="5.500"/><circle cx="1005" cy="647" r="5.500"/></g>
        <g class="dimtxt"><text x="703" y="964">35.00</text><text x="922" y="877">30.00</text><text x="1141" y="857">35.00</text>
          <text transform="translate(1150 648) rotate(90)">100.00</text><text transform="translate(693 995) rotate(-90)">3.00</text><text transform="translate(914 995) rotate(90)">3.00</text></g>
      </g>
    </svg>
    <div data-part="overlays"></div>

    <div class="cmenu d-flex flex-column">
      <button class="plain d-flex align-items-center"><span class="ic"><svg width="24" height="16"><path d="M6 13h5M17 2c7 0 7 11 0 11" fill="none" stroke="#777" stroke-width="1.500"/><path d="M0 11h3v3H0zM13 11h3v3h-3zM13 0h3v3h-3z" fill="#1e90e8"/></svg></span>Línea<span class="ms-auto key text-start">L</span></button>
      <button class="plain d-flex align-items-center"><span class="ic"></span>Rectángulo<i class="sub ms-auto"></i></button>
      <button class="plain d-flex align-items-center"><span class="ic"></span>Círculo<i class="sub ms-auto"></i></button>
      <button class="plain d-flex align-items-center"><span class="ic"></span>Arco<i class="sub ms-auto"></i></button>
      <button class="plain d-flex align-items-center"><span class="ic"></span>Polígono<i class="sub ms-auto"></i></button>
      <button class="plain d-flex align-items-center"><span class="ic"><svg width="24" height="16"><ellipse cx="11" cy="9" rx="10" ry="6" fill="none" stroke="#777" stroke-width="1.500"/><path d="M10 1h3v3h-3zM20 8h3v3h-3zM10 8h3v3h-3z" fill="#1e90e8"/></svg></span>Elipse</button>
      <button class="plain d-flex align-items-center"><span class="ic"></span>Ranura<i class="sub ms-auto"></i></button>
      <button class="plain d-flex align-items-center"><span class="ic"></span>Spline<i class="sub ms-auto"></i></button>
      <button class="plain d-flex align-items-center"><span class="ic"><svg width="24" height="24"><path d="M2 20C5-2 18-2 21 20" fill="none" stroke="#777" stroke-width="1.500"/><path d="M10 0h3v3h-3zM0 20h3v3H0zM20 20h3v3h-3z" fill="#1e90e8"/></svg></span>Curva cónica</button>
      <button class="plain d-flex align-items-center"><span class="ic"><svg width="22" height="22"><path d="M11 0v8M11 14v8M0 11h8M14 11h8" stroke="#777" stroke-width="1.500"/><path d="M9 9h4v4H9z" fill="#555"/></svg></span>Punto</button>
      <button class="plain d-flex align-items-center"><span class="ic"><svg width="22" height="22"><path d="M8 0h6l8 22h-5l-2-5H7l-2 5H0zM11 5l-3 9h6z" fill="#5a5a5a" fill-rule="evenodd"/></svg></span>Texto</button>
      <hr>
      <button class="plain hot d-flex align-items-center"><span class="ic"><svg width="24" height="22" fill="none"><path d="M10 2v18H1z" stroke="#666" stroke-width="1.500"/><path d="M13 2v18h9z" stroke="#1e90e8" stroke-width="1.500"/></svg></span>Simetría<svg class="ms-auto" width="10" height="18"><path d="M0 1h3v3H0zM0 8h3v3H0zM0 14h3v3H0z" fill="#111"/></svg></button>
      <button class="plain d-flex align-items-center"><span class="ic"><svg width="22" height="24" fill="none" stroke="#1e90e8" stroke-width="2"><circle cx="11" cy="3" r="2"/><circle cx="11" cy="20" r="2"/><circle cx="3" cy="16" r="2"/><circle cx="19" cy="7" r="2"/><circle cx="19" cy="16" r="2"/><circle cx="3" cy="7" r="2" stroke="#666"/></svg></span>Patrón circular</button>
      <button class="plain d-flex align-items-center"><span class="ic"><svg width="22" height="22" fill="none" stroke="#1e90e8" stroke-width="2"><path d="M15 2h4v4h-4zM2 15h4v4H2zM15 15h4v4h-4z"/><path d="M2 2h4v4H2zM8 4h4M8 17h4M4 9v4" stroke="#666"/></svg></span>Patrón rectangular</button>
      <hr>
      <button class="plain d-flex align-items-center"><span class="ic"></span>Proyectar/Incluir<i class="sub ms-auto"></i></button>
      <hr>
      <button class="plain d-flex align-items-center"><span class="ic"><svg width="24" height="20"><path d="M1 0v20M22 0v20" stroke="#777" stroke-width="2"/><path d="M2 6h19M6 3L3 6l3 3M17 3l3 3-3 3" fill="none" stroke="#1e90e8" stroke-width="1.500"/></svg></span>Cota de boceto<span class="ms-auto key text-start">D</span></button>
    </div>

    <div class="tip" role="tooltip">
      <p>Realiza la simetría de las curvas de boceto seleccionadas<br>sobre una línea de boceto seleccionada.</p>
      <p>Seleccione las curvas de simetría y, a continuación,<br>seleccione la línea de simetría.</p>
      <p class="more">Pulse Ctrl+/ para obtener más ayuda.</p>
    </div>

    <form class="float palette">
      <div class="head d-flex align-items-center"><svg width="6" height="16"><use href="#gripr"/></svg><svg class="ms-2" width="14" height="14"><use href="#minus"/></svg><span class="flex-grow-1" style="margin-left:5px">PALETA DE BOCETO</span><svg width="15" height="9"><use href="#fwd"/></svg></div>
      <div class="prow d-flex align-items-center fw-bold" style="padding-left:6px"><svg style="margin-right:6px" width="13" height="9"><path d="M0 0h13L6.500 9z" fill="#222"/></svg>Opciones</div>
      <div class="prow d-flex align-items-center justify-content-between">Tipo de línea<button type="button" class="plain" aria-label="Construcción"><svg width="24" height="24"><path d="M22 1L4 11M7 14l14 8" stroke="#888" stroke-width="2"/><path d="M0 12h24" stroke="#ee8a4a" stroke-width="2" stroke-dasharray="6 2"/><path d="M16 1l5 5M16 22l5-5M20 9v6" stroke="#ee8a4a" stroke-width="2"/></svg></button></div>
      <div class="prow d-flex align-items-center justify-content-end"><button type="button" class="plain" aria-label="Línea central"><svg width="24" height="22"><path d="M6 1h9v3h7v14h-7v3H6l-4-4V5z" fill="none" stroke="#bbb" stroke-width="2"/><path d="M0 11h24" stroke="#f5bb95" stroke-width="2" stroke-dasharray="7 2"/></svg></button></div>
      <div class="prow d-flex align-items-center justify-content-between">Mirar a<button type="button" class="plain" aria-label="Mirar a"><svg width="24" height="22"><use href="#look"/></svg></button></div>
      <div class="prow d-flex align-items-center justify-content-between"><label for="o1">Rejilla del boceto</label><input class="chk" type="checkbox" id="o1"></div>
      <div class="prow d-flex align-items-center justify-content-between"><label for="o2">Forzar</label><input class="chk" type="checkbox" id="o2"></div>
      <div class="prow d-flex align-items-center justify-content-between"><label for="o3">Corte</label><input class="chk" type="checkbox" id="o3"></div>
      <div class="prow d-flex align-items-center justify-content-between"><label for="o4">Mostrar el perfil</label><input class="chk" type="checkbox" id="o4" checked></div>
      <div class="prow d-flex align-items-center justify-content-between"><label for="o5">Mostrar puntos</label><input class="chk" type="checkbox" id="o5" checked></div>
      <div class="prow d-flex align-items-center justify-content-between"><label for="o6">Mostrar cotas</label><input class="chk" type="checkbox" id="o6" checked></div>
      <div class="prow d-flex align-items-center justify-content-between"><label for="o7">Mostrar restricciones</label><input class="chk" type="checkbox" id="o7" checked></div>
      <div class="prow d-flex align-items-center justify-content-between"><label for="o8">Mostrar las geometrías proyectadas</label><input class="chk" type="checkbox" id="o8" checked></div>
      <div class="prow d-flex align-items-center justify-content-between"><label for="o9">Boceto 3D</label><input class="chk" type="checkbox" id="o9"></div>
      <div class="foot d-flex align-items-center justify-content-end"><button type="button" class="dbtn">Terminar boceto</button></div>
    </form>

    <svg class="layer notes"><g transform="translate(0 -195)">
      <path d="M564 345H447V556H354" fill="none" stroke="#000" stroke-width="5" marker-start="url(#bk)" marker-end="url(#bk)"/>
      <text class="num" x="628" y="373">1</text></g></svg>
  </main>
  <div data-part="foot"></div>
</section>

<section class="win-b">
  <div data-part="frame"></div>
  <main class="canvas">
    <svg class="layer">
      <defs>
        <pattern id="m2" patternUnits="userSpaceOnUse" x="908.850" y="587.850" width="52.300" height="52.300"><path d="M26.150 0v53M0 26.150h53" stroke="#f0f0f0" stroke-width="2"/></pattern>
        <pattern id="M2" patternUnits="userSpaceOnUse" x="804.250" y="483.250" width="261.500" height="261.500"><path d="M130.750 0v262M0 130.750h262" stroke="#d4d4d4" stroke-width="2"/></pattern>
      </defs>
      <rect width="100%" height="100%" fill="url(#m2)"/><rect width="100%" height="100%" fill="url(#M2)"/>
      <path d="M0 614h4000" stroke="#ffb3b3" stroke-width="3"/><path d="M935 0v2000" stroke="#b0ffb0" stroke-width="2"/>
      <g transform="translate(0 -1375)" fill="none">
        <circle cx="935" cy="1989" r="13" fill="#bbb" stroke="#8c8c8c" stroke-width="3"/>
        <path d="M943 1452H1126V1437H1283V1452H1466" stroke="#777" stroke-width="2"/>
        <path d="M1466 1976V1453" stroke="#7bc8ec" stroke-width="3"/>
        <path d="M1198 1815V1989" stroke="#e6ac7c" stroke-width="2" stroke-dasharray="16 6"/>
        <path d="M1269 1714H1467" stroke="#1a82f0" stroke-width="5" stroke-dasharray="17 4"/>
        <g stroke="#111" stroke-width="2">
          <path d="M944 1958v17M1127 1890V1975M1283 1876V1975M1366 1452H1460M1024 1991H1118M1182 1975H1275"/>
          <g marker-start="url(#ar)" marker-end="url(#ar)"><path d="M945 1966H1126"/><path d="M1128 1899H1282"/><path d="M1285 1883H1465"/><path d="M1373 1453V1974"/></g>
          <g marker-start="url(#as)" marker-end="url(#as)"><path d="M1034 1976V1990"/><path d="M1191 1976V1990"/></g>
        </g>
        <path d="M943 1976H1127V1991H1284V1976H1467" stroke="#0a80ff" stroke-width="5"/>
        <g stroke="#999" stroke-opacity=".7" stroke-width="4" stroke-linecap="round"><path d="M1100 2002l14-17M1111 1980l9 11M1152 1964l-12 16M1132 1977l9 10M1224 1964l-11 14M1206 1977l9 10M1257 1964l13 16M1277 1977l-9 10M1295 1988l15 15M1290 1990l9-10M1440 1948l14 16M1461 1960l-9 12"/></g>
        <path d="M1021 1982h28v10h-28zM1021 1987h28M1025 1992l5-5M1033 1992l5-5M1041 1992l5-5" stroke="#888" stroke-opacity=".7" stroke-width="3"/>
        <use href="#geo" x="1437" y="1686" width="28" height="26"/>
        <g fill="#fff" stroke="#999" stroke-width="2"><circle cx="1466" cy="1452" r="5.500"/><circle cx="943" cy="1975" r="5.500"/><circle cx="1198" cy="1810" r="5.500"/><circle cx="1269" cy="1714" r="5" fill="#8ab8ec"/></g>
        <g class="dimtxt"><text x="1035" y="1957">35.00</text><text x="1205" y="1890">30.00</text><text x="1374" y="1875">35.00</text>
          <text transform="translate(1382 1714) rotate(90)">100.00</text><text transform="translate(1025 1983) rotate(-90)">3.00</text><text transform="translate(1200 1983) rotate(90)">3.00</text></g>
      </g>
    </svg>
    <div data-part="overlays"></div>

    <div class="side d-flex flex-column align-items-center"><svg width="15" height="9"><use href="#rew"/></svg><span>PALETA DE BOCETO</span></div>
    <form class="float mirror">
      <div class="head d-flex align-items-center"><svg width="6" height="16"><use href="#gripr"/></svg><svg class="ms-2" width="13" height="13"><use href="#minus"/></svg><span class="flex-grow-1" style="margin-left:6px">SIMETRÍA</span><svg width="15" height="9"><use href="#fwd"/></svg></div>
      <div class="mrow d-flex align-items-center pt-1"><span class="mlabel">Objetos</span><button type="button" class="plain pick d-flex align-items-center justify-content-center gap-1"><svg width="16" height="24"><use href="#arrow"/></svg>5 seleccionado</button><button type="button" class="plain clearx d-flex justify-content-center" aria-label="Borrar objetos"><svg width="13" height="13"><use href="#mx"/></svg></button></div>
      <div class="mrow d-flex align-items-center pt-1"><span class="mlabel">Eje de simetría</span><button type="button" class="plain pick on d-flex align-items-center justify-content-center gap-1"><svg width="16" height="24"><use href="#arrow"/></svg>1 seleccionado</button><button type="button" class="plain clearx d-flex justify-content-center" aria-label="Borrar eje"><svg width="13" height="13"><use href="#mx"/></svg></button></div>
      <div class="foot d-flex align-items-center mt-1"><svg width="18" height="18"><circle cx="9" cy="9" r="9" fill="#000"/><path d="M7 3h4v3H7zM6 7h5v6h1v2H6v-2h1V9H6z" fill="#fff"/></svg>
        <button type="button" class="dbtn ms-auto" style="width:86px">Aceptar</button><button type="button" class="dbtn px-0" style="width:86px;margin-left:14px">Cancelar</button></div>
    </form>
    <div class="status">6 Curvas de boceto | Longitud : 143.675 mm</div>

    <svg class="layer notes"><g transform="translate(0 -1375)" fill="none" stroke-width="5">
      <path d="M1774 1591H1503V1930" stroke="#ed7d31" stroke-width="4" marker-start="url(#og)" marker-end="url(#og)"/>
      <path d="M1765 1646H1625V1716H1485" stroke="#70ad47" marker-start="url(#gn)" marker-end="url(#gn)"/>
      <path d="M2023 1712V1852H1870V1994" stroke="#000" marker-start="url(#bk)" marker-end="url(#bk)"/>
      <ellipse cx="1208" cy="1972" rx="338" ry="58" stroke="#ed7d31" stroke-width="3"/>
      <g class="num" stroke="none"><text x="1630" y="1551">2</text><text x="1668" y="1731">3</text><text x="1873" y="2074">4</text></g></g></svg>
  </main>
  <div data-part="foot"></div>
</section>

<script>
document.querySelectorAll('[data-part]').forEach(function (slot) {
  slot.replaceWith(document.getElementById(slot.dataset.part).content.cloneNode(true));
});
</script>
</body>
</html>
